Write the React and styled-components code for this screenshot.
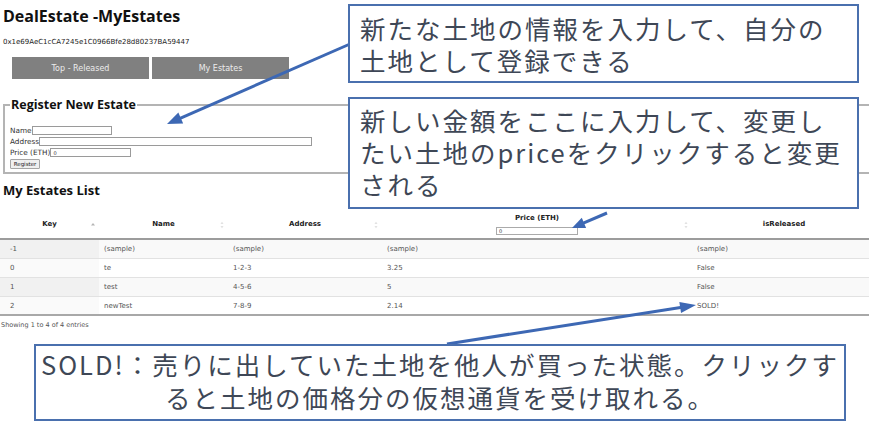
import React from 'react';
import styled, { createGlobalStyle } from 'styled-components';

const GlobalStyle = createGlobalStyle`
  html, body {
    margin: 0;
    padding: 0;
    background: #fff;
    overflow: hidden;
  }
  #root {
    width: 869px;
    height: 426px;
  }
`;

const Screen = styled.div`
  position: relative;
  width: 869px;
  height: 426px;
  overflow: hidden;
  font-family: "DejaVu Sans", Verdana, sans-serif;
  color: #333;
`;

const Title = styled.h1`
  margin: 0 0 0 3px;
  padding-top: 6px;
  font: 700 16px/20px "Open Sans", sans-serif;
  color: #111;
`;

const Account = styled.p`
  margin: 11px 0 0 3px;
  font-size: 7px;
  line-height: 10px;
  color: #222;
`;

const Nav = styled.nav`
  display: flex;
  gap: 3px;
  margin: 10px 0 0 12px;
`;

const NavButton = styled.div`
  width: 137px;
  height: 22px;
  display: flex;
  align-items: center;
  justify-content: center;
  background: #808080;
  color: #ececec;
  font-size: 8px;
`;

const Fieldset = styled.fieldset`
  margin: 19px -20px 0 3px;
  padding: 0 5px 3px;
  border: 2px solid #b4b4b4;
  min-width: 0;
`;

const Legend = styled.legend`
  padding: 0 1px;
  font: 700 12.5px/13px "Open Sans", sans-serif;
  color: #111;
`;

const Fields = styled.div`
  margin-top: 14px;
`;

const Field = styled.div`
  display: flex;
  align-items: center;
  height: 11px;
  font-size: 7.3px;
  color: #333;
`;

const TextInput = styled.input`
  box-sizing: border-box;
  width: ${p => p.$w}px;
  height: 9px;
  margin: 0;
  padding: 0 2px;
  border: 1px solid #9a9a9a;
  background: #fff;
  font: 5px "DejaVu Sans", sans-serif;
  color: #333;
`;

const SmallButton = styled.button`
  box-sizing: border-box;
  width: 30px;
  height: 10px;
  margin: 0;
  padding: 0;
  border: 1px solid #a5a5a5;
  border-radius: 1px;
  background: #efefef;
  font: 5.5px "DejaVu Sans", sans-serif;
  color: #222;
`;

const SectionTitle = styled.h2`
  margin: 8px 0 0 3px;
  font: 700 13px/16px "Open Sans", sans-serif;
  color: #111;
`;

const Table = styled.table`
  margin-top: 14px;
  width: 876px;
  table-layout: fixed;
  border-collapse: separate;
  border-spacing: 0;
  font-size: 7px;

  tbody tr:last-child td {
    border-bottom: 2px solid #a8a8a8;
    padding-bottom: 3px;
  }
`;

const Th = styled.th`
  position: relative;
  padding: 2px 5px 3.5px;
  border-bottom: 2px solid #9c9c9c;
  font-weight: 700;
  line-height: 9px;
  color: #222;
  text-align: center;
  vertical-align: middle;
`;

const HeaderFilter = styled.input`
  display: block;
  box-sizing: border-box;
  width: 82px;
  height: 8px;
  margin: 3.5px auto 0;
  padding: 0 2px;
  border: 1px solid #aaa;
  font: 400 5px "DejaVu Sans", sans-serif;
  color: #333;
`;

const SortMark = styled.svg`
  position: absolute;
  right: 4px;
  top: 50%;
  transform: translateY(-50%);
`;

const Row = styled.tr`
  background: ${p => (p.$odd ? '#f9f9f9' : '#fff')};
`;

const Td = styled.td`
  padding: 5px 5px 4px ${p => p.$pl || 5}px;
  border-bottom: 1px solid #e2e2e2;
  line-height: 9px;
  color: #555;
  white-space: nowrap;
  background: ${p => (p.$sorted ? (p.$odd ? '#f1f1f1' : '#fafafa') : 'transparent')};
`;

const Info = styled.div`
  margin: 5px 0 0 1px;
  font-size: 6.5px;
  line-height: 8px;
  color: #555;
`;

const Callout = styled.div`
  position: absolute;
  left: ${p => p.$left}px;
  top: ${p => p.$top}px;
  width: ${p => p.$width}px;
  height: ${p => p.$height}px;
  box-sizing: border-box;
  padding: ${p => p.$pad};
  border: 2px solid #4a70ae;
  background: #fff;
  font: 400 25.5px/${p => p.$lh || 32}px "Noto Sans CJK JP", sans-serif;
  letter-spacing: 2px;
  color: #3e4756;
  text-align: ${p => p.$align || 'left'};
  white-space: nowrap;
`;

const Arrows = styled.svg`
  position: absolute;
  left: 0;
  top: 0;
  pointer-events: none;
`;

const ARROW = '#3d68b4';

function Arrow({ x1, y1, x2, y2, len = 14, w = 11 }) {
  const dx = x2 - x1;
  const dy = y2 - y1;
  const l = Math.hypot(dx, dy);
  const ux = dx / l;
  const uy = dy / l;
  const bx = x2 - ux * len;
  const by = y2 - uy * len;
  const px = -uy * (w / 2);
  const py = ux * (w / 2);
  return (
    <g>
      <line x1={x1} y1={y1} x2={bx + ux * 2} y2={by + uy * 2} stroke={ARROW} strokeWidth="3" />
      <polygon
        points={`${x2},${y2} ${bx + px},${by + py} ${bx - px},${by - py}`}
        fill={ARROW}
      />
    </g>
  );
}

const SortIcon = ({ active }) =>
  active ? (
    <SortMark width="4" height="7" viewBox="0 0 4 7">
      <polygon points="2,1.5 4,4 0,4" fill="#b5b5b5" />
    </SortMark>
  ) : (
    <SortMark width="4" height="7" viewBox="0 0 4 7">
      <polygon points="2,0 3.5,2.5 0.5,2.5" fill="#e2e2e2" />
      <polygon points="2,7 3.5,4.5 0.5,4.5" fill="#e2e2e2" />
    </SortMark>
  );

const estates = [
  { key: '-1', name: '(sample)', address: '(sample)', price: '(sample)', status: '(sample)' },
  { key: '0', name: 'te', address: '1-2-3', price: '3.25', status: 'False' },
  { key: '1', name: 'test', address: '4-5-6', price: '5', status: 'False' },
  { key: '2', name: 'newTest', address: '7-8-9', price: '2.14', status: 'SOLD!' },
];

const App = () => (
  <Screen>
    <GlobalStyle />
    <Title>DealEstate -MyEstates</Title>
    <Account>0x1e69AeC1cCA7245e1C0966Bfe28d80237BA59447</Account>
    <Nav>
      <NavButton>Top - Released</NavButton>
      <NavButton>My Estates</NavButton>
    </Nav>

    <Fieldset>
      <Legend>Register New Estate</Legend>
      <Fields>
        <Field>
          Name<TextInput $w={80} readOnly />
        </Field>
        <Field>
          Address<TextInput $w={273} readOnly />
        </Field>
        <Field>
          Price (ETH)<TextInput $w={81} value="0" readOnly />
        </Field>
        <Field>
          <SmallButton>Register</SmallButton>
        </Field>
      </Fields>
    </Fieldset>

    <SectionTitle>My Estates List</SectionTitle>
    <Table>
      <colgroup>
        <col style={{ width: 99 }} />
        <col style={{ width: 129 }} />
        <col style={{ width: 154 }} />
        <col style={{ width: 310 }} />
        <col style={{ width: 184 }} />
      </colgroup>
      <thead>
        <tr>
          <Th>Key<SortIcon active /></Th>
          <Th>Name<SortIcon /></Th>
          <Th>Address<SortIcon /></Th>
          <Th>
            Price (ETH)
            <HeaderFilter value="0" readOnly />
            <SortIcon />
          </Th>
          <Th>isReleased</Th>
        </tr>
      </thead>
      <tbody>
        {estates.map((e, i) => (
          <Row key={e.key} $odd={i % 2 === 0}>
            <Td $pl={10} $sorted $odd={i % 2 === 0}>{e.key}</Td>
            <Td>{e.name}</Td>
            <Td>{e.address}</Td>
            <Td>{e.price}</Td>
            <Td>{e.status}</Td>
          </Row>
        ))}
      </tbody>
    </Table>
    <Info>Showing 1 to 4 of 4 entries</Info>

    <Arrows width="869" height="426" viewBox="0 0 869 426">
      <Arrow x1={350} y1={44} x2={167} y2={124} len={15} w={12} />
      <Arrow x1={607} y1={213} x2={572} y2={228} len={13} w={11} />
      <Arrow x1={447} y1={344} x2={696} y2={305} len={16} w={11} />
    </Arrows>

    <Callout $left={348} $top={4} $width={511} $height={79} $pad="6px 0 0 10px">
      新たな土地の情報を入力して、自分の
      <br />
      土地として登録できる
    </Callout>
    <Callout $left={348} $top={97} $width={511} $height={112} $pad="5px 0 0 10px">
      新しい金額をここに入力して、変更し
      <br />
      たい土地のpriceをクリックすると変更
      <br />
      される
    </Callout>
    <Callout $left={34} $top={344} $width={812} $height={77} $pad="1px 0 0" $lh={33} $align="center">
      SOLD!：売りに出していた土地を他人が買った状態。クリックす
      <br />
      ると土地の価格分の仮想通貨を受け取れる。
    </Callout>
  </Screen>
);

export default App;
